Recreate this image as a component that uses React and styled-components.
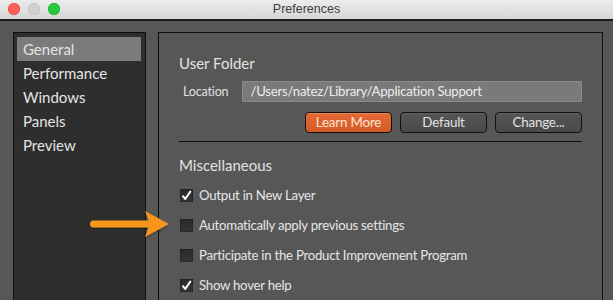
import React from 'react';
import styled, { createGlobalStyle } from 'styled-components';

const GlobalStyle = createGlobalStyle`
  *, *::before, *::after { box-sizing: border-box; }
  body {
    margin: 0;
    background: #575757;
    font-family: Lato, "Open Sans", sans-serif;
  }
`;

const sections = ['General', 'Performance', 'Windows', 'Panels', 'Preview'];

const options = [
  { label: 'Output in New Layer', checked: true },
  { label: 'Automatically apply previous settings', checked: false },
  { label: 'Participate in the Product Improvement Program', checked: false },
  { label: 'Show hover help', checked: true },
];

function CheckMark() {
  return (
    <svg width="11" height="11" viewBox="0 0 11 11">
      <path d="M2 6.2 L4.2 9 L9.3 1.6" fill="none" stroke="#fff" strokeWidth="2" strokeLinecap="round" strokeLinejoin="round" />
    </svg>
  );
}

function Arrow() {
  return (
    <ArrowWrap>
      <svg width="90" height="32" viewBox="0 0 90 32">
        <defs>
          <filter id="sh" x="-10%" y="-20%" width="120%" height="150%">
            <feDropShadow dx="0" dy="1" stdDeviation="1" floodColor="#000" floodOpacity="0.45" />
          </filter>
        </defs>
        <g filter="url(#sh)" fill="#f7961f">
          <rect x="3" y="12.5" width="62" height="7" rx="3.5" />
          <path d="M58 3 L82 16 L58 29 L63 16 Z" />
        </g>
      </svg>
    </ArrowWrap>
  );
}

export default function App() {
  return (
    <>
      <GlobalStyle />
      <Window>
        <TitleBar>
          <Lights>
            <Light color="#fc5f57" edge="#e0443e" />
            <Light color="#d0d0d0" edge="#bdbdbd" />
            <Light color="#2ac840" edge="#1ea831" />
          </Lights>
          <Title>Preferences</Title>
        </TitleBar>
        <Body>
          <Sidebar>
            {sections.map((s, i) => (
              <NavItem key={s} active={i === 0}>{s}</NavItem>
            ))}
          </Sidebar>
          <Panel>
            <Heading>User Folder</Heading>
            <LocationRow>
              <Label>Location</Label>
              <PathField>/Users/natez/Library/Application Support</PathField>
            </LocationRow>
            <ButtonRow>
              <Button primary>Learn More</Button>
              <Button>Default</Button>
              <Button>Change...</Button>
            </ButtonRow>
            <Divider />
            <Heading second>Miscellaneous</Heading>
            <OptionList>
              {options.map((o) => (
                <OptionRow key={o.label}>
                  <Box>{o.checked && <CheckMark />}</Box>
                  <OptionText>{o.label}</OptionText>
                </OptionRow>
              ))}
            </OptionList>
          </Panel>
          <Arrow />
        </Body>
      </Window>
    </>
  );
}

const Window = styled.div`
  width: 613px;
  height: 300px;
  overflow: hidden;
  display: flex;
  flex-direction: column;
  background: #575757;
`;

const TitleBar = styled.div`
  position: relative;
  height: 21px;
  flex-shrink: 0;
  display: flex;
  align-items: center;
  justify-content: center;
  background: linear-gradient(#ececec, #d6d6d6);
  border-bottom: 2px solid #1a1a1a;
`;

const Lights = styled.div`
  position: absolute;
  left: 8px;
  top: 3px;
  display: flex;
  gap: 8px;
`;

const Light = styled.span`
  width: 12px;
  height: 12px;
  border-radius: 50%;
  background: ${(p) => p.color};
  box-shadow: inset 0 0 0 0.5px ${(p) => p.edge};
`;

const Title = styled.div`
  font-family: "Liberation Sans", Arial, sans-serif;
  font-size: 12.5px;
  margin-top: -1px;
  color: #404040;
`;

const Body = styled.div`
  position: relative;
  flex: 1;
  display: flex;
  gap: 12px;
  padding: 11px 10px 0 13px;
`;

const Sidebar = styled.div`
  width: 133px;
  flex-shrink: 0;
  background: #2e2e2e;
  border: 1px solid #0e0e0e;
  border-bottom: none;
  padding: 4px 4px 0 3px;
  display: flex;
  flex-direction: column;
`;

const NavItem = styled.div`
  height: 24px;
  line-height: 24px;
  padding-left: 6px;
  font-size: 15px;
  color: #e4e4e4;
  background: ${(p) => (p.active ? '#7b7b7b' : 'transparent')};
`;

const Panel = styled.div`
  flex: 1;
  border: 1px solid #0e0e0e;
  border-bottom: none;
  padding: 20px 20px 0 20px;
  display: flex;
  flex-direction: column;
`;

const Heading = styled.div`
  font-size: 15px;
  line-height: 20px;
  color: #e2e2e2;
  margin-top: ${(p) => (p.second ? '13px' : '0')};
`;

const LocationRow = styled.div`
  display: flex;
  align-items: center;
  gap: 14px;
  margin-top: 8px;
  padding-left: 4px;
`;

const Label = styled.div`
  font-size: 12.6px;
  letter-spacing: -0.2px;
  color: #e0e0e0;
`;

const PathField = styled.div`
  flex: 1;
  height: 21px;
  line-height: 19px;
  padding-left: 7px;
  background: #7a7a7a;
  border: 1px solid #8a8a8a;
  font-size: 13.2px;
  letter-spacing: -0.25px;
  color: #ececec;
`;

const ButtonRow = styled.div`
  display: flex;
  justify-content: flex-end;
  gap: 8px;
  margin-top: 10px;
`;

const Button = styled.div`
  width: 87px;
  height: 21px;
  line-height: 19px;
  text-align: center;
  font-size: 13.4px;
  letter-spacing: -0.2px;
  border-radius: 4px;
  border: 1px solid #111;
  color: ${(p) => (p.primary ? '#fbe3d6' : '#e2e2e2')};
  background: ${(p) => (p.primary ? 'linear-gradient(#e56a34, #d45a26)' : 'linear-gradient(#555, #4a4a4a)')};
  box-shadow: inset 0 1px 0 ${(p) => (p.primary ? 'rgba(255,180,140,0.35)' : 'rgba(255,255,255,0.08)')};
`;

const Divider = styled.div`
  height: 1px;
  background: #111;
  margin-top: 8px;
`;

const OptionList = styled.div`
  display: flex;
  flex-direction: column;
  margin-top: 5px;
`;

const OptionRow = styled.div`
  height: 30px;
  display: flex;
  align-items: center;
  gap: 6px;
  padding-left: 1px;
`;

const Box = styled.div`
  width: 13px;
  height: 13px;
  display: flex;
  align-items: center;
  justify-content: center;
  background: linear-gradient(#2a2a2a, #363636);
  box-shadow: inset 0 0 2px rgba(0, 0, 0, 0.7);
`;

const OptionText = styled.div`
  font-size: 13.2px;
  letter-spacing: -0.25px;
  color: #e6e6e6;
`;

const ArrowWrap = styled.div`
  position: absolute;
  left: 87px;
  top: 187px;
  line-height: 0;
`;
